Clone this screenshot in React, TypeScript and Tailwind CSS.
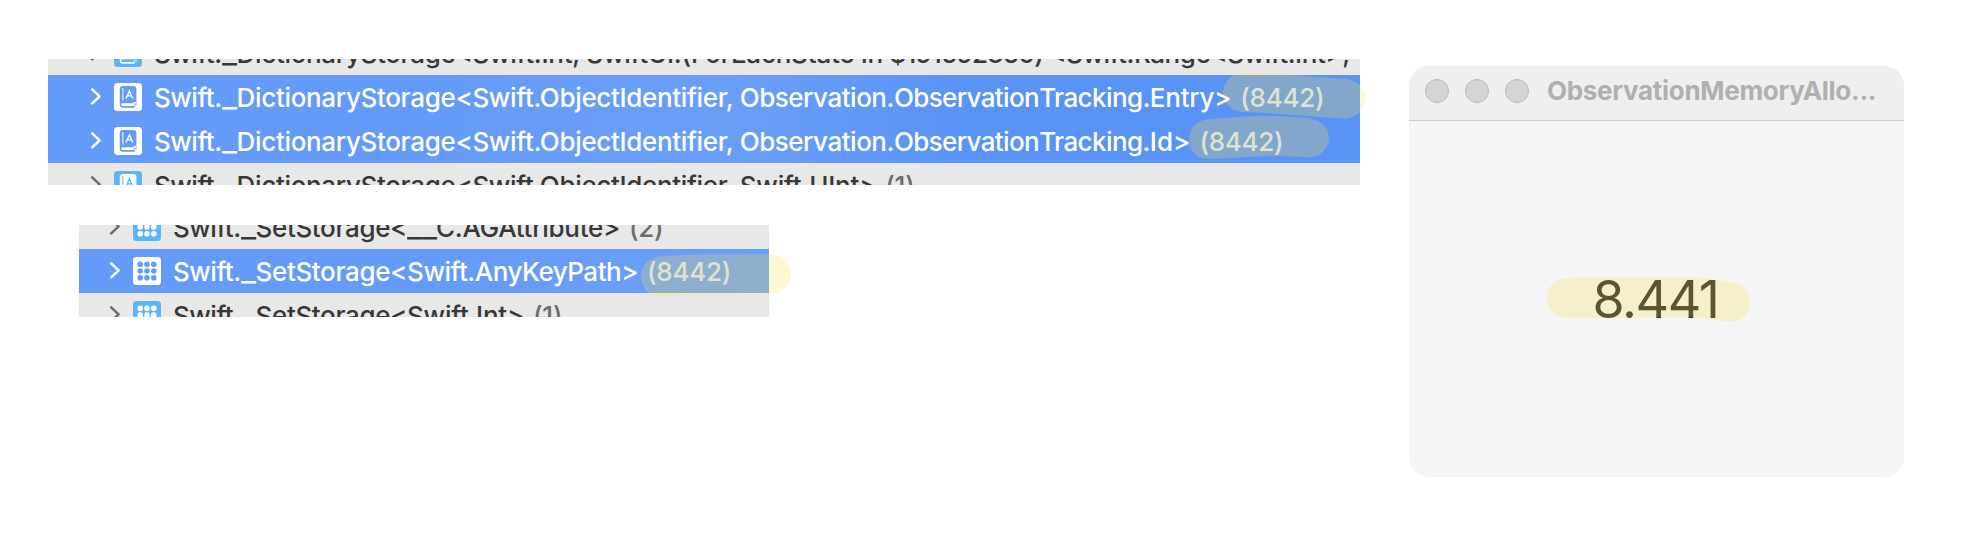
type Kind = 'dict' | 'set';
type Part = [text: string, style: string];

interface RowProps {
  kind: Kind;
  parts: Part[];
  count?: string;
  selected?: boolean;
}

const DICT: Part[] = [
  ['Swift.', 'tracking-[-0.5px]'],
  ['_', 'inline-block w-[15px] origin-left scale-x-125'],
  ['DictionaryStorage<', 'tracking-[-0.33px]'],
];
const OBJECT_ID: Part = ['Swift.ObjectIdentifier, ', 'tracking-[-0.333px]'];
const TRACKING: Part[] = [
  ['Observation.', 'tracking-[-0.48px]'],
  ['Observation', 'tracking-[-0.62px]'],
  ['Tracking.', 'tracking-[-0.58px]'],
];
const SET: Part[] = [
  ['Swift.', 'tracking-[-0.5px]'],
  ['_', 'inline-block w-[15px] origin-left scale-x-125'],
  ['SetStorage<', 'tracking-[-0.36px]'],
];

function DictIcon({ fg, bg }: { fg: string; bg: string }) {
  return (
    <svg className="block h-7 w-7 shrink-0" viewBox="0 0 28 28" fill="none">
      <rect width="28" height="28" rx="3.5" fill={bg} />
      <rect x="5.8" y="3" width="16.6" height="21.7" rx="3" fill={fg} />
      <path d="M8.9 5V17.5" stroke={bg} strokeWidth="1" />
      <path d="M12 15.4 15.4 7.9 18.8 15.4M13.2 12.8h4.4" stroke={bg} strokeWidth="1.3" />
      <path d="M8.6 20.2H19.4L20 22.9H8.6A1.35 1.35 0 0 1 8.6 20.2Z" fill={bg} />
      <path d="M18.5 20.2 21.6 19.6 20.7 21.6 21.6 24.2" stroke={bg} strokeWidth="1.1" />
    </svg>
  );
}

function SetIcon({ fg, bg }: { fg: string; bg: string }) {
  return (
    <svg className="block h-7 w-7 shrink-0" viewBox="0 0 28 28">
      <rect width="28" height="28" rx="3.5" fill={bg} />
      {[7.2, 14, 20.8].map((y) =>
        [7.2, 14, 20.8].map((x) => <circle key={`${x}-${y}`} cx={x} cy={y} r="2.8" fill={fg} />),
      )}
    </svg>
  );
}

function Row({ kind, parts, count, selected }: RowProps) {
  const fg = selected ? '#659bf8' : '#ffffff';
  const bg = selected ? '#ffffff' : '#5cb5fb';
  const Icon = kind === 'dict' ? DictIcon : SetIcon;
  return (
    <div className="flex h-11 shrink-0 items-center whitespace-pre">
      <svg className="mr-3 block h-5 w-3 shrink-0" viewBox="0 0 12 20" fill="none">
        <path
          d="M2.2 2.3 9.6 9.3 2.2 16.3"
          stroke={selected ? '#ffffff' : '#6e6e6e'}
          strokeWidth="2.5"
          strokeLinecap="round"
          strokeLinejoin="round"
        />
      </svg>
      <Icon fg={fg} bg={bg} />
      <span className={`ml-3 pt-0.5 text-[26px] leading-[44px] font-medium ${selected ? 'text-white' : 'text-[#383838]'}`}>
        {parts.map(([text, style]) => (
          <span key={text} className={style}>{text}</span>
        ))}
      </span>
      {count && (
        <span className={`ml-[9px] pt-0.5 text-[26px] leading-[44px] font-medium tracking-[-0.3px] ${selected ? 'text-[#d5e3fb]' : 'text-[#6c6c6c]'}`}>{count}</span>
      )}
    </div>
  );
}

export default function App() {
  return (
    <div className="relative flex h-[539px] w-[1974px] overflow-hidden bg-white pl-12 font-['Inter',sans-serif]">
      <div className="w-[1312px] shrink-0 pt-[59px]">
        <div className="flex h-[126px] w-[1312px] flex-col overflow-hidden bg-[#e8e8e8]">
          <div className="-mt-7 flex flex-col pl-[42px]">
            <Row kind="dict" parts={[...DICT, ['Swift.Int, ', 'tracking-[-0.25px]'], ['SwiftUI.(ForEachState in ', 'tracking-[-0.22px]'], ['$191692360) ', 'tracking-[-0.83px]'], ['<Swift.Range<Swift.Int>, <', 'tracking-[-0.44px]']]} />
          </div>
          <div className="flex flex-col bg-linear-to-r from-[#659bf8] from-30% via-[#6a9ff8] via-52% to-[#5a93f6] to-70% pl-[42px]">
            <Row kind="dict" selected parts={[...DICT, OBJECT_ID, ...TRACKING, ['Entry>', 'tracking-[-0.25px]']]} count="(8442)" />
            <Row kind="dict" selected parts={[...DICT, OBJECT_ID, ...TRACKING, ['Id>', '']]} count="(8442)" />
          </div>
          <div className="flex flex-col pl-[42px]">
            <Row kind="dict" parts={[...DICT, OBJECT_ID, ['Swift.UInt>', 'tracking-[-0.2px]']]} count="(1)" />
          </div>
        </div>
        <div className="mt-10 ml-[31px] flex h-[92px] w-[690px] flex-col overflow-hidden bg-[#e8e8e8]">
          <div className="-mt-5 flex flex-col pl-[30px]">
            <Row kind="set" parts={[...SET, ['__', 'inline-block w-[29px] origin-left scale-x-125'], ['C.AGAttribute>', 'tracking-[-0.28px]']]} count="(2)" />
          </div>
          <div className="flex flex-col bg-linear-to-r from-[#659bf8] from-50% to-[#6a9ff8] pl-[30px]">
            <Row kind="set" selected parts={[...SET, ['Swift.AnyKeyPath>', 'tracking-[-0.48px]']]} count="(8442)" />
          </div>
          <div className="flex flex-col pl-[30px]">
            <Row kind="set" parts={[...SET, ['Swift.Int>', 'tracking-[-0.25px]']]} count="(1)" />
          </div>
        </div>
      </div>
      <div className="mt-[66px] ml-[49px] flex h-[411px] w-[495px] shrink-0 flex-col overflow-hidden rounded-[20px] bg-[#f5f5f5]">
        <div className="flex h-[55px] shrink-0 items-center border-b border-[#cdcdcd] bg-[#efefef] pb-1 pl-4">
          <div className="flex gap-4">
            <div className="h-6 w-6 rounded-full border border-[#b9b9b9] bg-[#d5d5d5]" />
            <div className="h-6 w-6 rounded-full border border-[#b9b9b9] bg-[#d5d5d5]" />
            <div className="h-6 w-6 rounded-full border border-[#b9b9b9] bg-[#d5d5d5]" />
          </div>
          <h1 className="ml-[18px] pb-px text-[26px] font-bold tracking-[-0.3px] text-[#b0b0b0]">ObservationMemoryAllo...</h1>
        </div>
        <div className="flex flex-1 items-center justify-center pt-0.5 pr-0.5">
          <span className="text-[52px] tracking-[-1.5px] text-[#262626]">8.441</span>
        </div>
      </div>
      <svg className="pointer-events-none absolute inset-0 h-[539px] w-[1974px]" viewBox="0 0 1974 539">
        <g fill="#fae34a" fillOpacity="0.25">
          <path d="M1245 72C1275 72 1310 77.5 1345 79C1357 79.500 1365 88 1365 98C1365 110 1356 119 1344 118.500C1310 117 1275 112.500 1243 112C1231 111.500 1223 102 1223 93C1223.500 81 1233 72 1245 72Z" />
          <path d="M1207 119.500C1225 118 1243 116 1262 116C1280 116 1292 117 1302 117.500C1318 118 1329 126 1329 138C1329 149 1319 158 1307 157.500C1292 156 1276 156 1260 156.500C1242 157 1225 159 1207 159C1197 159 1189 150 1189 139C1189 129 1197 120 1207 119.500Z" />
          <path d="M660 256.500C680 255 698 254.500 717 254.500L770 254C782 254 791 263 791 274C791 285 782 293.500 770 293.500C746 293.500 723 293.500 700 294.500C686 295 673 296.500 660 296.500C649 296.500 641 287 641 276C641 265 650 257.500 660 256.500Z" />
          <path d="M1565 278.500C1576 278.500 1586 277 1597 277C1609 277 1621 278 1633 278C1649 278 1664 277 1680 277C1689 277 1698 278.500 1707 278.500C1715 279 1722 281 1730 282C1742 283 1750 291 1750 301C1750 313 1742 322 1732 321.500C1723 321.500 1715 319.500 1707 318.500C1698 318 1689 317 1680 317C1664 317 1649 318 1633 318L1567 318C1556 318 1547 309 1547 298C1547 287 1555 279 1565 278.500Z" />
        </g>
      </svg>
    </div>
  );
}
